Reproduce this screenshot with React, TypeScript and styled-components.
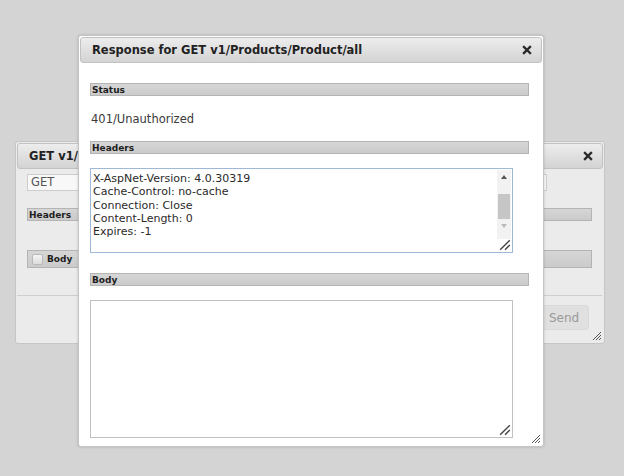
import React from "react";
import styled, { createGlobalStyle } from "styled-components";

const GlobalStyle = createGlobalStyle`
  html, body {
    margin: 0;
    padding: 0;
    background: #d4d4d4;
    font-family: "DejaVu Sans", Verdana, sans-serif;
  }
`;

const Desktop = styled.div`
  position: relative;
  width: 624px;
  height: 476px;
  overflow: hidden;
  background: #d4d4d4;
`;

const Window = styled.div<{ $front?: boolean }>`
  position: absolute;
  box-sizing: border-box;
  display: flex;
  flex-direction: column;
  border: 1px solid ${(p) => (p.$front ? "#c4c4c4" : "#c6c6c6")};
  border-radius: 3px;
  background: ${(p) => (p.$front ? "#ffffff" : "#ebebeb")};
  box-shadow: ${(p) => (p.$front ? "0 0 3px rgba(0,0,0,0.18)" : "none")};
  overflow: hidden;
`;

const TitleBar = styled.div<{ $height: number }>`
  display: flex;
  align-items: center;
  justify-content: space-between;
  height: ${(p) => p.$height}px;
  margin: 1px 1px 0 1px;
  padding: 0 9px 0 11px;
  box-sizing: border-box;
  border: 1px solid #c2c2c2;
  border-radius: 3px;
  background: linear-gradient(#ededed, #d3d3d3);
  flex-shrink: 0;
`;

const Title = styled.span`
  font-size: 11.5px;
  font-weight: bold;
  color: #222;
  white-space: nowrap;
`;

const CloseButton = styled.span`
  display: flex;
  width: 10px;
  height: 10px;
  align-items: center;
  justify-content: center;
  flex-shrink: 0;
`;

const Content = styled.div<{ $pad: string }>`
  display: flex;
  flex-direction: column;
  padding: ${(p) => p.$pad};
  flex: 1;
  min-height: 0;
`;

const SectionBar = styled.div<{ $height?: number; $mt?: number }>`
  display: flex;
  align-items: center;
  gap: 4px;
  box-sizing: border-box;
  height: ${(p) => p.$height ?? 13}px;
  margin-top: ${(p) => p.$mt ?? 0}px;
  padding-left: 1px;
  border: 1px solid #b4b4b4;
  background: linear-gradient(#d6d6d6, #cbcbcb);
  font-size: 9px;
  font-weight: bold;
  color: #1e1e1e;
  line-height: 10px;
  overflow: hidden;
`;

const StatusText = styled.div`
  margin: 16px 0 15px 1px;
  font-size: 11.5px;
  line-height: 14px;
  color: #3a3a3a;
`;

const TextBox = styled.div<{ $height: number; $focused?: boolean; $mt: number }>`
  position: relative;
  box-sizing: border-box;
  width: 423px;
  height: ${(p) => p.$height}px;
  margin-top: ${(p) => p.$mt}px;
  border: 1px solid ${(p) => (p.$focused ? "#9fb8d8" : "#c2c2c2")};
  background: #fff;
  overflow: hidden;
`;

const HeaderLines = styled.div`
  padding: 3px 20px 0 2px;
  font-size: 11px;
  line-height: 13.3px;
  color: #2a2a2a;
  white-space: pre;
`;

const ScrollTrack = styled.div`
  position: absolute;
  right: 1px;
  top: 1px;
  width: 14px;
  height: 69px;
  background: #f2f2f2;
  display: flex;
  flex-direction: column;
  align-items: center;
`;

const Arrow = styled.div<{ $up?: boolean; $dim?: boolean }>`
  width: 0;
  height: 0;
  margin: 5px 0;
  border-left: 3px solid transparent;
  border-right: 3px solid transparent;
  ${(p) =>
    p.$up
      ? `border-bottom: 4px solid ${p.$dim ? "#bbb" : "#555"};`
      : `border-top: 4px solid ${p.$dim ? "#bbb" : "#555"};`}
`;

const Thumb = styled.div`
  width: 12px;
  height: 25px;
  margin-top: 10px;
  background: #c6c6c6;
`;

const Grip = styled.svg<{ $r: number; $b: number }>`
  position: absolute;
  right: ${(p) => p.$r}px;
  bottom: ${(p) => p.$b}px;
`;

const FormInput = styled.div`
  box-sizing: border-box;
  width: 520px;
  height: 17px;
  margin-top: 5px;
  padding-left: 3px;
  border: 1px solid #cdcdcd;
  background: #f8f8f8;
  font-size: 11.5px;
  line-height: 15px;
  color: #555;
`;

const CheckBox = styled.span`
  width: 9px;
  height: 9px;
  margin-left: 3px;
  border: 1px solid #b9b9b9;
  border-radius: 2px;
  background: linear-gradient(#f4f4f4, #dcdcdc);
`;

const Divider = styled.div`
  height: 1px;
  margin: 27px -10px 0 -10px;
  background: #cfcfcf;
`;

const Footer = styled.div`
  display: flex;
  justify-content: flex-end;
  padding: 9px 3px 0 0;
`;

const SendButton = styled.div`
  width: 50px;
  height: 25px;
  display: flex;
  align-items: center;
  justify-content: center;
  border-radius: 3px;
  background: #e0e0e0;
  border: 1px solid #dadada;
  font-size: 12px;
  color: #9a9a9a;
  box-sizing: border-box;
`;

const CloseIcon = () => (
  <svg width="10" height="10" viewBox="0 0 10 10">
    <path d="M2 2 L8 8 M8 2 L2 8" stroke="#2a2a2a" strokeWidth="2.4" strokeLinecap="square" />
  </svg>
);

const GripIcon = ({ size, color, lines }: { size: number; color: string; lines: number }) => (
  <svg width={size} height={size} viewBox="0 0 10 10">
    {lines === 2 ? (
      <path d="M1 9 L9 1 M5 9 L9 5" stroke={color} strokeWidth="1.2" />
    ) : (
      <path d="M1 9 L9 1 M4 9 L9 4 M7 9 L9 7" stroke={color} strokeWidth="1" />
    )}
  </svg>
);

const headerText = [
  "X-AspNet-Version: 4.0.30319",
  "Cache-Control: no-cache",
  "Connection: Close",
  "Content-Length: 0",
  "Expires: -1",
].join("\n");

export default function App() {
  return (
    <>
      <GlobalStyle />
      <Desktop>
        <Window style={{ left: 15, top: 141, width: 590, height: 203 }}>
          <TitleBar $height={26}>
            <Title>GET v1/Products/Product/all</Title>
            <CloseButton>
              <CloseIcon />
            </CloseButton>
          </TitleBar>
          <Content $pad="0 12px 0 11px">
            <FormInput>GET</FormInput>
            <SectionBar $mt={17} $height={13}>Headers</SectionBar>
            <SectionBar $mt={29} $height={18}>
              <CheckBox />
              Body
            </SectionBar>
            <Divider />
            <Footer>
              <SendButton>Send</SendButton>
            </Footer>
          </Content>
          <Grip $r={2} $b={2} width="10" height="10">
            <GripIcon size={10} color="#555" lines={3} />
          </Grip>
        </Window>

        <Window $front style={{ left: 78, top: 35, width: 466, height: 412 }}>
          <TitleBar $height={26}>
            <Title>Response for GET v1/Products/Product/all</Title>
            <CloseButton>
              <CloseIcon />
            </CloseButton>
          </TitleBar>
          <Content $pad="20px 14px 0 11px">
            <SectionBar>Status</SectionBar>
            <StatusText>401/Unauthorized</StatusText>
            <SectionBar>Headers</SectionBar>
            <TextBox $height={85} $focused $mt={14}>
              <HeaderLines>{headerText}</HeaderLines>
              <ScrollTrack>
                <Arrow $up />
                <Thumb />
                <Arrow $dim />
              </ScrollTrack>
              <Grip $r={1} $b={1} width="12" height="12">
                <GripIcon size={12} color="#444" lines={2} />
              </Grip>
            </TextBox>
            <SectionBar $mt={20}>Body</SectionBar>
            <TextBox $height={138} $mt={14}>
              <Grip $r={1} $b={1} width="12" height="12">
                <GripIcon size={12} color="#444" lines={2} />
              </Grip>
            </TextBox>
          </Content>
          <Grip $r={2} $b={2} width="10" height="10">
            <GripIcon size={10} color="#555" lines={3} />
          </Grip>
        </Window>
      </Desktop>
    </>
  );
}
